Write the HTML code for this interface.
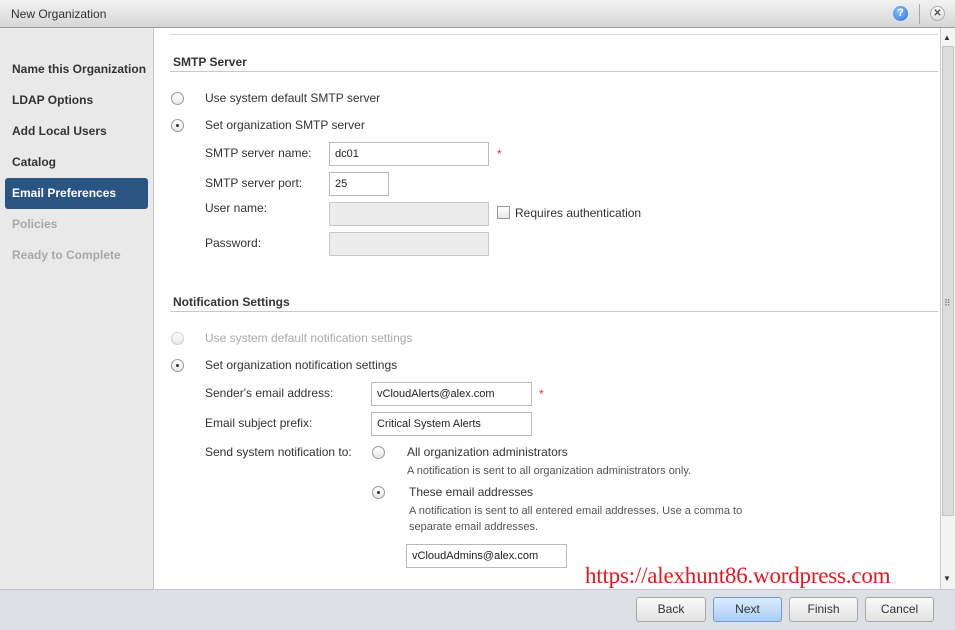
<!DOCTYPE html>
<html><head><style>
*{margin:0;padding:0;box-sizing:border-box}
body{width:955px;height:630px;overflow:hidden;font-family:"Liberation Sans",Arial,sans-serif;font-size:12px;color:#333;position:relative;background:#fff}
.a{position:absolute;white-space:nowrap}
#title{left:0;top:0;width:955px;height:28px;background:linear-gradient(#f2f2f2,#d6d6d6);border-bottom:1px solid #9a9a9a}
#left{left:0;top:28px;width:154px;height:561px;background:#e9e9e9;border-right:1px solid #c8c8c8}
.nav{left:12px;font-weight:bold;font-size:12px;color:#333}
.hdr{font-weight:bold;color:#333}
.line{height:1px;background:#c8c8c8}
.rad{width:13px;height:13px;border:1px solid #999;border-radius:50%;background:linear-gradient(#fff,#e8e8e8)}
.rad.on::after{content:"";position:absolute;left:4px;top:4px;width:3px;height:3px;border-radius:50%;background:#333}
.inp{border:1px solid #b9b9b9;background:#fff;height:24px;padding:0 5px;line-height:22px;font-size:11px;color:#222}
.dis{background:#ececec;border-color:#c8c8c8}
.lbl{color:#333}
.small{font-size:11px;color:#555}
.star{color:#e33;font-size:12px}
.btn{top:597px;height:25px;border:1px solid #a8a8a8;border-radius:3px;background:linear-gradient(#fafafa,#e2e2e2);text-align:center;line-height:23px;font-size:12px;color:#333}
</style></head><body>
<div class="a" id="title"></div>
<div class="a" style="left:11px;top:7px;font-size:12px;color:#333">New Organization</div>
<div class="a" style="left:893px;top:6px;width:15px;height:15px;border-radius:50%;background:radial-gradient(circle at 40% 35%,#8cc4ff,#1f6fd6);color:#fff;font-weight:bold;font-size:11px;text-align:center;line-height:15px">?</div>
<div class="a" style="left:919px;top:4px;width:1px;height:20px;background:#a8a8a8"></div>
<div class="a" style="left:930px;top:6px;width:15px;height:15px;border-radius:50%;border:1px solid #aaa;background:linear-gradient(#fff,#ddd);color:#555;font-weight:bold;font-size:10px;text-align:center;line-height:13px">✕</div>

<div class="a" id="left"></div>
<div class="a nav" style="top:62px">Name this Organization</div>
<div class="a nav" style="top:93px">LDAP Options</div>
<div class="a nav" style="top:124px">Add Local Users</div>
<div class="a nav" style="top:155px">Catalog</div>
<div class="a" style="left:5px;top:178px;width:143px;height:31px;background:#2a5582;border-radius:3px"></div>
<div class="a nav" style="top:186px;color:#fff">Email Preferences</div>
<div class="a nav" style="top:217px;color:#a8a8a8">Policies</div>
<div class="a nav" style="top:248px;color:#a8a8a8">Ready to Complete</div>

<div class="a line" style="left:170px;top:34px;width:768px;background:#d3dcdc"></div>
<div class="a hdr" style="left:173px;top:55px">SMTP Server</div>
<div class="a line" style="left:170px;top:71px;width:768px"></div>
<div class="a rad" style="left:171px;top:92px"></div>
<div class="a lbl" style="left:205px;top:91px">Use system default SMTP server</div>
<div class="a rad on" style="left:171px;top:119px"></div>
<div class="a lbl" style="left:205px;top:118px">Set organization SMTP server</div>
<div class="a lbl" style="left:205px;top:146px">SMTP server name:</div>
<div class="a inp" style="left:329px;top:142px;width:160px">dc01</div>
<div class="a star" style="left:497px;top:147px">*</div>
<div class="a lbl" style="left:205px;top:176px">SMTP server port:</div>
<div class="a inp" style="left:329px;top:172px;width:60px">25</div>
<div class="a lbl" style="left:205px;top:201px">User name:</div>
<div class="a inp dis" style="left:329px;top:202px;width:160px"></div>
<div class="a" style="left:497px;top:206px;width:13px;height:13px;border:1px solid #999;background:linear-gradient(#fff,#e8e8e8)"></div>
<div class="a lbl" style="left:515px;top:206px">Requires authentication</div>
<div class="a lbl" style="left:205px;top:236px">Password:</div>
<div class="a inp dis" style="left:329px;top:232px;width:160px"></div>

<div class="a hdr" style="left:173px;top:295px">Notification Settings</div>
<div class="a line" style="left:170px;top:311px;width:768px"></div>
<div class="a rad" style="left:171px;top:332px;border-color:#d0d0d0"></div>
<div class="a lbl" style="left:205px;top:331px;color:#aaa">Use system default notification settings</div>
<div class="a rad on" style="left:171px;top:359px"></div>
<div class="a lbl" style="left:205px;top:358px">Set organization notification settings</div>
<div class="a lbl" style="left:205px;top:386px">Sender's email address:</div>
<div class="a inp" style="left:371px;top:382px;width:161px">vCloudAlerts@alex.com</div>
<div class="a star" style="left:539px;top:387px">*</div>
<div class="a lbl" style="left:205px;top:416px">Email subject prefix:</div>
<div class="a inp" style="left:371px;top:412px;width:161px">Critical System Alerts</div>
<div class="a lbl" style="left:205px;top:445px">Send system notification to:</div>
<div class="a rad" style="left:372px;top:446px"></div>
<div class="a lbl" style="left:407px;top:445px">All organization administrators</div>
<div class="a small" style="left:407px;top:465px">A notification is sent to all organization administrators only.</div>
<div class="a rad on" style="left:372px;top:486px"></div>
<div class="a lbl" style="left:409px;top:485px">These email addresses</div>
<div class="a small" style="left:409px;top:505px">A notification is sent to all entered email addresses. Use a comma to</div>
<div class="a small" style="left:409px;top:521px">separate email addresses.</div>
<div class="a inp" style="left:406px;top:544px;width:161px">vCloudAdmins@alex.com</div>
<div class="a" style="left:585px;top:563px;font-family:'Liberation Serif',serif;font-size:23px;color:#e8161e;letter-spacing:-0.2px">https://alexhunt86.wordpress.com</div>

<div class="a" style="left:940px;top:28px;width:15px;height:561px;background:#f4f4f4;border-left:1px solid #ccc"></div>
<div class="a" style="left:943px;top:33px;font-size:8px;color:#333">▲</div>
<div class="a" style="left:942px;top:46px;width:12px;height:470px;background:#dcdcdc;border:1px solid #c4c4c4"></div>
<div class="a" style="left:944px;top:298px;font-size:9px;color:#777">⠿</div>
<div class="a" style="left:943px;top:574px;font-size:8px;color:#333">▼</div>

<div class="a" style="left:0;top:589px;width:955px;height:41px;background:#dde0e5;border-top:1px solid #c2c6cc"></div>
<div class="a btn" style="left:636px;width:70px">Back</div>
<div class="a btn" style="left:713px;width:69px;background:linear-gradient(#dcecff,#a9cdf5);border-color:#6d9ad0">Next</div>
<div class="a btn" style="left:789px;width:69px">Finish</div>
<div class="a btn" style="left:865px;width:69px">Cancel</div>
</body></html>
